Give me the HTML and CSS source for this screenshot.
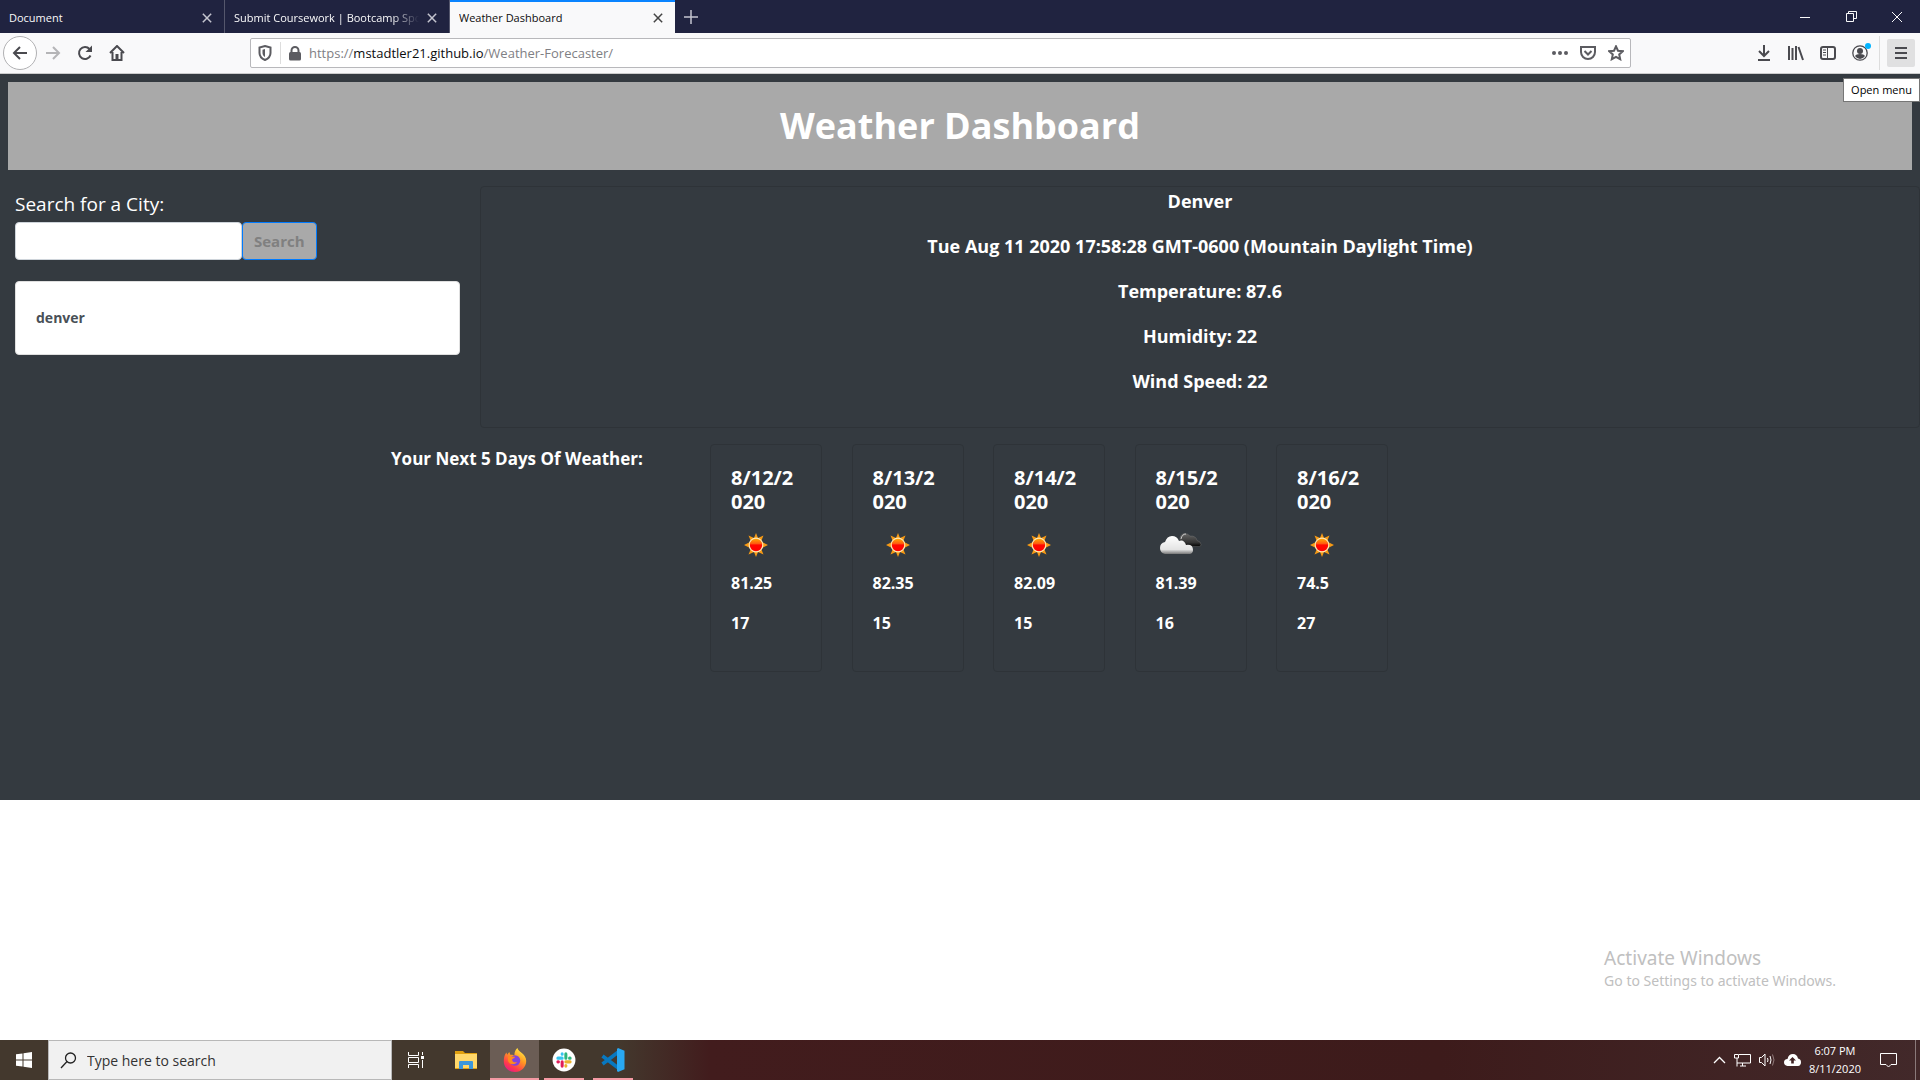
FILE: index.html
```html
<!DOCTYPE html>
<html lang="en">
<head>
<meta charset="utf-8">
<title>Weather Dashboard</title>
<link rel="stylesheet" href="styles.css">
</head>
<body>
<svg class="defs" aria-hidden="true">
  <defs>
    <linearGradient id="sunCore" x1="0" y1="0" x2="0" y2="1"><stop offset="0" stop-color="#ffb000"/><stop offset=".4" stop-color="#ff5a10"/><stop offset=".5" stop-color="#ff0800"/><stop offset="1" stop-color="#ff0000"/></linearGradient>
    <linearGradient id="cloudLight" x1="0" y1="0" x2="0" y2="1"><stop offset="0" stop-color="#fff"/><stop offset=".75" stop-color="#e4e4e4"/><stop offset="1" stop-color="#777"/></linearGradient>
    <linearGradient id="cloudDark" x1="0" y1="0" x2="0" y2="1"><stop offset="0" stop-color="#666"/><stop offset=".7" stop-color="#333"/><stop offset="1" stop-color="#000"/></linearGradient>
    <linearGradient id="fox" x1=".8" y1="0" x2=".2" y2="1"><stop offset="0" stop-color="#fff14a"/><stop offset=".4" stop-color="#ff9a22"/><stop offset=".75" stop-color="#ff3b4b"/><stop offset="1" stop-color="#e4168f"/></linearGradient>
  </defs>
  <symbol id="sun" viewBox="0 0 24 24"><path fill="#f79a14" d="M12 0l2 5 5.500-2.500L17 8.500l7 3.500-7 3.500 2.500 6L14 19l-2 5-2-5-5.500 2.500 2.500-6L0 12l7-3.500-2.500-6L10 5z"/><circle cx="12" cy="12" r="6.800" fill="url(#sunCore)" stroke="#ffe6b0" stroke-width="1.200"/></symbol>
  <symbol id="clouds" viewBox="0 0 42 22"><path fill="url(#cloudDark)" stroke="#777" stroke-width=".4" d="M20 13V5q1-4.500 5-4.500 3 0 5 2.500 6-.5 7 4.500 4 1 4 4 0 2-2 2z"/><path d="M21 6q1-5 5-5" fill="none" stroke="#ccc"/><path fill="url(#cloudLight)" d="M5 21q-5-1-5-6 0-5 5-6Q7 3 12 3q5 0 7 5 5-2 7 4 7-1 7 5 0 3-3 4z"/></symbol>
  <symbol id="x" viewBox="0 0 12 12"><path d="M1 1l10 10M11 1L1 11" fill="none" stroke="currentColor" stroke-width="1.800"/></symbol>
</svg>

<div class="browser">
  <div class="tabs">
    <div class="tab"><span class="tab-title">Document</span><button class="icon-btn" aria-label="Close tab"><svg width="10" height="10"><use href="#x"/></svg></button></div>
    <div class="tab"><span class="tab-title faded">Submit Coursework | Bootcamp Spot</span><button class="icon-btn" aria-label="Close tab"><svg width="10" height="10"><use href="#x"/></svg></button></div>
    <div class="tab active"><span class="tab-title">Weather Dashboard</span><button class="icon-btn" aria-label="Close tab"><svg width="10" height="10"><use href="#x"/></svg></button></div>
    <button class="icon-btn new-tab" aria-label="New tab"><svg width="14" height="14" viewBox="0 0 14 14"><path d="M7 0v14M0 7h14" stroke="currentColor" stroke-width="1.500"/></svg></button>
    <div class="window-controls">
      <button class="icon-btn" aria-label="Minimize"><svg width="10" height="10"><path d="M0 5.500h10" stroke="currentColor"/></svg></button>
      <button class="icon-btn" aria-label="Restore"><svg width="11" height="11" fill="none"><path d="M.5 2.500h7v8h-7zM2.500 2.500v-2h8v7h-3" stroke="currentColor"/></svg></button>
      <button class="icon-btn" aria-label="Close"><svg width="10" height="10"><path d="M0 0l10 10M10 0L0 10" stroke="currentColor"/></svg></button>
    </div>
  </div>

  <div class="toolbar">
    <div class="nav-buttons">
      <button class="icon-btn back" aria-label="Back"><svg width="16" height="16" viewBox="0 0 16 16"><path d="M15 8H2M8 2L2 8l6 6" class="line"/></svg></button>
      <button class="icon-btn forward" aria-label="Forward"><svg width="16" height="16" viewBox="0 0 16 16"><path d="M1 8h13M8 2l6 6-6 6" class="line"/></svg></button>
      <button class="icon-btn" aria-label="Reload"><svg width="16" height="16" viewBox="0 0 16 16"><path d="M13.500 10.500A6 6 0 1 1 12.500 4" class="line"/><path d="M15 .5v6.500H8.500z" fill="currentColor"/></svg></button>
      <button class="icon-btn" aria-label="Home"><svg width="16" height="16" viewBox="0 0 16 16"><path d="M1 8l7-7 7 7M3.500 7v8h9V7" class="line"/><path d="M6.500 9h3v6h-3z" fill="currentColor"/></svg></button>
    </div>
    <div class="url-bar">
      <svg width="14" height="16" viewBox="0 0 14 16"><path d="M7 1l5.500 1.500V8c0 3-2 5.500-5.500 7C3.500 13.500 1.500 11 1.500 8V2.500z" class="line"/><path d="M7 4l-2.500.7V8c0 1.500.8 3 2.500 4z" fill="currentColor"/></svg>
      <span class="url-divider"></span>
      <svg width="12" height="15" viewBox="0 0 12 15"><rect y="6" width="12" height="8.500" rx="1.500" fill="currentColor"/><path d="M2.500 7V4.500a3.500 3.500 0 0 1 7 0V7" class="line"/></svg>
      <span class="url">https://<b>mstadtler21.github.io</b>/Weather-Forecaster/</span>
      <button class="icon-btn" aria-label="Page actions"><svg width="16" height="4"><g fill="currentColor"><circle cx="2" cy="2" r="2"/><circle cx="8" cy="2" r="2"/><circle cx="14" cy="2" r="2"/></g></svg></button>
      <button class="icon-btn" aria-label="Save to Pocket"><svg width="16" height="16" viewBox="0 0 16 16"><path d="M1 2h14v5a7 7 0 0 1-14 0zM4.500 6L8 9.500 11.500 6" class="line"/></svg></button>
      <button class="icon-btn" aria-label="Bookmark"><svg width="16" height="16" viewBox="0 0 16 16"><path d="M8 1.300l2 4.400 4.800.5-3.600 3.200 1 4.800L8 11.800l-4.200 2.400 1-4.800L1.200 6.200 6 5.700z" class="line"/></svg></button>
    </div>
    <div class="tools">
      <button class="icon-btn" aria-label="Downloads"><svg width="14" height="16" viewBox="0 0 14 16"><path d="M7 0v11M2 6l5 5 5-5M1 15h12" class="line"/></svg></button>
      <button class="icon-btn" aria-label="Library"><svg width="16" height="16" viewBox="0 0 16 16"><path d="M1 1v14M4.500 3v12M8 1v14M10.500 2L15 15" class="line"/></svg></button>
      <button class="icon-btn" aria-label="Sidebar"><svg width="16" height="14" viewBox="0 0 16 14"><rect x="1" y="1" width="14" height="12" rx="2" class="line"/><path d="M7.500 1v12M3 4h3M3 6.500h3M3 9h3" stroke="currentColor"/></svg></button>
      <button class="icon-btn account" aria-label="Account"><svg width="16" height="16" viewBox="0 0 16 16"><circle cx="8" cy="8" r="7.200" fill="none" stroke="currentColor" stroke-width="1.300"/><circle cx="8" cy="6" r="3" fill="currentColor"/><path d="M3 11q1-2 5-2t5 2q-2 3-5 3t-5-3" fill="currentColor"/></svg><span class="badge"></span></button>
      <span class="tool-divider"></span>
      <button class="icon-btn menu" aria-label="Open menu"><svg width="12" height="12"><path d="M0 1h12M0 6h12M0 11h12" stroke="currentColor" stroke-width="2"/></svg></button>
    </div>
    <div class="tooltip" role="tooltip">Open menu</div>
  </div>
</div>

<main class="page">
  <header class="banner"><h1>Weather Dashboard</h1></header>
  <div class="top">
    <section class="search-col">
      <label for="city">Search for a City:</label>
      <form class="search-form"><input id="city" type="text"><button type="button">Search</button></form>
      <ul class="history"><li>denver</li></ul>
    </section>
    <section class="card today">
      <p>Denver</p>
      <p>Tue Aug 11 2020 17:58:28 GMT-0600 (Mountain Daylight Time)</p>
      <p>Temperature: 87.6</p>
      <p>Humidity: 22</p>
      <p>Wind Speed: 22</p>
    </section>
  </div>
  <section class="forecast">
    <h2>Your Next 5 Days Of Weather:</h2>
    <div class="days">
      <article class="card day"><h3>8/12/2020</h3><svg class="wx"><use href="#sun" x="13" width="24" height="24"/></svg><p>81.25</p><p>17</p></article>
      <article class="card day"><h3>8/13/2020</h3><svg class="wx"><use href="#sun" x="13" width="24" height="24"/></svg><p>82.35</p><p>15</p></article>
      <article class="card day"><h3>8/14/2020</h3><svg class="wx"><use href="#sun" x="13" width="24" height="24"/></svg><p>82.09</p><p>15</p></article>
      <article class="card day"><h3>8/15/2020</h3><svg class="wx"><use href="#clouds" x="4" width="42" height="22"/></svg><p>81.39</p><p>16</p></article>
      <article class="card day"><h3>8/16/2020</h3><svg class="wx"><use href="#sun" x="13" width="24" height="24"/></svg><p>74.5</p><p>27</p></article>
    </div>
  </section>
</main>

<aside class="watermark"><strong>Activate Windows</strong><span>Go to Settings to activate Windows.</span></aside>

<footer class="taskbar">
  <button class="task start" aria-label="Start"><svg width="16" height="16" viewBox="0 0 16 16"><path fill="#fff" d="M0 2.300L6.500 1.400v6.100H0zM7.500 1.200L16 0v7.500H7.500zM0 8.500h6.500v6.100L0 13.700zM7.500 8.500H16V16l-8.500-1.200z"/></svg></button>
  <label class="task-search"><svg width="17" height="17" viewBox="0 0 17 17"><circle cx="10.500" cy="6" r="5" fill="none" stroke="#222" stroke-width="1.300"/><path d="M7 9.500L1 16" stroke="#222" stroke-width="1.300"/></svg><input type="text" placeholder="Type here to search" aria-label="Type here to search"></label>
  <button class="task" aria-label="Task view"><svg width="17" height="16" viewBox="0 0 17 16" fill="none" stroke="#fff"><path d="M.5 0v3.500h10V0M.5 16v-3.500h10V16M.5 5.500h10v5H.5zM14.500 0v3M14.500 8v8"/><path d="M13 5.500h3" stroke-width="3"/></svg></button>
  <button class="task" aria-label="File Explorer"><svg width="22" height="18" viewBox="0 0 22 18"><path d="M0 0h8l2 2h12v16H0z" fill="#e0a010"/><path d="M0 3h22v14H0z" fill="#ffd86b"/><path d="M4 18v-7q0-1 1-1h12q1 0 1 1v7h-4v-4H8v4z" fill="#3b97dc"/></svg></button>
  <button class="task current running" aria-label="Firefox"><svg width="24" height="24" viewBox="0 0 24 24"><path fill="url(#fox)" d="M14.500 0c.5 2.200 2 3.200 3.700 4.500 3 2.400 5 5 5 8.500C23.200 19 18.500 24 12 24S.8 19.200.8 13c0-3.600 1-6.500 2.700-8.400l.6 2.200L6.300 4l1 2.700c2-.2 3.200.3 4.200 1.100C11.200 4.600 12.200 1.800 14.500 0z"/><circle cx="12" cy="12.500" r="5.200" fill="#8243dc"/><path fill="#ff8a1e" d="M5 8.500c2.500-.8 4 .5 7 .3-.3 1.500-2 1.700-3 2.700.4 2.700 3 3.500 5 2.300-.7 3-7.500 4-9-1.300z"/></svg></button>
  <button class="task running" aria-label="Slack"><svg width="24" height="24" viewBox="0 0 22 22"><circle cx="11" cy="11" r="10.500" fill="#fff"/><g stroke-width="2.800" stroke-linecap="round"><path d="M9.300 5.400v.4M5.400 9.300h3.900" stroke="#36c5f0"/><path d="M12.700 5.400v3.900M16.600 9.300h-.5" stroke="#2eb67d"/><path d="M12.700 12.700h3.900M12.700 16.600v-.5" stroke="#ecb22e"/><path d="M9.300 12.700v3.900M5.400 12.700h.5" stroke="#e01e5a"/></g></svg></button>
  <button class="task running" aria-label="Visual Studio Code"><svg width="24" height="24" viewBox="0 0 24 24"><path d="M1.500 8L18 20.500M1.500 16L18 3.500" stroke="#0878c0" stroke-width="3.600"/><path fill="#29a8f2" d="M17 0l6.500 2.800v18.400L17 24l-1-1V1z"/></svg></button>
  <div class="tray">
    <svg width="13" height="8" viewBox="0 0 13 8"><path d="M1 7l5.500-5.500L12 7" fill="none" stroke="#fff" stroke-width="1.300"/></svg>
    <svg width="17" height="14" viewBox="0 0 17 14" fill="none" stroke="#fff"><path d="M5 1.500h11.500v8.500H3V5M.5 1.500h4v3.500h-4zM8.500 10v3M6 13h6M3 10v3.500"/></svg>
    <svg width="17" height="14" viewBox="0 0 17 14" fill="none" stroke="#fff"><path d="M.5 4.500h2L6 1v12L2.500 9.500h-2zM8.500 5q1 2 0 4M11 3q2 4 0 8"/><path d="M13.500 1.500q3 5.500 0 11" stroke="#927c7c"/></svg>
    <svg width="17" height="12" viewBox="0 0 17 12"><path fill="#fff" d="M3.500 12Q0 11.500 0 8.300 0 5.300 3.500 5 4.500 0 9 0q4 0 5 4.500 3 .5 3 3.700 0 3.300-3 3.800z"/><path fill="#402223" d="M8.500 3L12 6.500H9.800V9.500H7.200V6.500H5z"/></svg>
    <div class="clock"><span>6:07 PM</span><span>8/11/2020</span></div>
    <button class="icon-btn" aria-label="Notifications"><svg width="17" height="17" viewBox="0 0 17 17"><path d="M.5 1.500h16v11H11L8.500 15 6 12.500H.5z" fill="none" stroke="#fff"/></svg></button>
    <span class="peek"></span>
  </div>
</footer>
</body>
</html>
```
FILE: styles.css
```css
* { box-sizing: border-box; }
body {
  margin: 0;
  min-height: 100vh;
  display: flex;
  flex-direction: column;
  background: #fff;
  font-family: "Open Sans", "Noto Sans", sans-serif;
}
button, input { font: inherit; }
.defs { position: absolute; width: 0; height: 0; }
.line { fill: none; stroke: currentColor; stroke-width: 2; }
.icon-btn {
  display: flex;
  align-items: center;
  justify-content: center;
  flex: none;
  padding: 0;
  border: 0;
  background: none;
  color: inherit;
}

/* Tab strip */
.tabs { display: flex; height: 33px; background: #202340; color: #f9f9fa; font-size: 11px; }
.tab {
  display: flex;
  align-items: center;
  gap: 8px;
  flex: 0 1 225px;
  min-width: 0;
  padding: 2px 12px 0 9px;
  border-right: 1px solid #55576c;
}
.tab .icon-btn { color: #c4c5cf; }
.tab-title { flex: 1; overflow: hidden; white-space: nowrap; }
.faded { mask-image: linear-gradient(to right, #000 85%, transparent); }
.tab.active { background: #f9f9fa; color: #0c0c0d; border-top: 2px solid #0a84ff; border-right: 0; padding-top: 0; }
.tab.active .icon-btn { color: #444; }
.new-tab { width: 32px; color: #c4c5cf; }
.window-controls { display: flex; margin-left: auto; }
.window-controls .icon-btn { width: 46px; }

/* Navigation toolbar */
.toolbar {
  position: relative;
  display: grid;
  grid-template-columns: 250px 1fr 289px;
  align-items: center;
  height: 41px;
  background: #f9f9fa;
  border-bottom: 1px solid #ccc;
  color: #4a4a4f;
}
.nav-buttons { display: flex; align-items: center; padding-left: 3px; }
.nav-buttons .icon-btn { width: 32px; height: 32px; }
.nav-buttons .back { width: 34px; height: 34px; border: 1px solid #b1b1b3; border-radius: 50%; background: #fff; }
.nav-buttons .forward { color: #b5b5b7; }
.url-bar {
  display: flex;
  align-items: center;
  gap: 8px;
  height: 30px;
  padding: 0 4px 0 7px;
  border: 1px solid #b8b8bb;
  border-radius: 2px;
  background: #fff;
  color: #5c5c61;
}
.url-divider { width: 1px; height: 22px; background: #ddd; }
.url { flex: 1; font-size: 13px; color: #808084; }
.url b { font-weight: 400; color: #0c0c0d; }
.url-bar .icon-btn { width: 20px; height: 20px; }
.tools { display: flex; align-items: center; justify-content: flex-end; padding-right: 5px; }
.tools .icon-btn { width: 32px; height: 28px; }
.account { position: relative; }
.badge { position: absolute; top: 4px; right: 5px; width: 6px; height: 6px; border-radius: 50%; background: #00b3ff; }
.tool-divider { width: 1px; height: 34px; margin: 0 7px 0 3px; background: #ddd; }
.tools .menu { width: 28px; border-radius: 2px; background: #e0e0e1; }
.tooltip {
  position: absolute;
  top: 45px;
  right: 0;
  padding: 2px 7px;
  border: 1px solid #767676;
  background: #fff;
  color: #000;
  font-size: 11px;
  line-height: 18px;
}

/* Dashboard */
.page { min-height: 726px; padding-top: 8px; background: #343a40; color: #fff; }
.banner { margin: 0 8px; padding: 20px; background: #a9a9a9; text-align: center; }
.banner h1 { margin: 0; font-size: 36px; line-height: 48px; }
.top { display: grid; grid-template-columns: 1fr 3fr; margin-top: 16px; }
.search-col { padding: 3px 20px 0 15px; }
.search-col label { display: block; font-size: 19px; line-height: 30px; }
.search-form { display: flex; margin-top: 3px; }
.search-form input { width: 227px; height: 38px; padding: 6px 12px; border: 1px solid #ced4da; border-radius: 4px; }
.search-form button {
  height: 38px;
  padding: 0 11px;
  border: 1px solid #007bff;
  border-radius: 4px;
  background: #a9a9a9;
  color: #808080;
  font-size: 15px;
  font-weight: 700;
}
.history { margin: 21px 0 0; padding: 20px; border: 1px solid #dfdfdf; border-radius: 4px; background: #fff; color: #495057; list-style: none; font-size: 14px; font-weight: 700; }
.history li { line-height: 32px; }
.card { border: 1px solid #2e3338; border-radius: 4px; }
.today { padding-bottom: 15px; text-align: center; font-size: 18px; font-weight: 700; }
.today p { margin: 0; padding: 1px 0 17px; line-height: 27px; }
.forecast { display: grid; grid-template-columns: 391fr 319fr 678fr 532fr; margin-top: 16px; }
.forecast h2 { grid-column: 2; margin: 0; font-size: 17px; line-height: 29px; }
.days { grid-column: 3; display: flex; justify-content: space-between; }
.day { width: 112px; padding: 21px 20px 20px; font-size: 16px; font-weight: 700; }
.day h3 { margin: 0; font-size: 20px; line-height: 24px; word-break: break-all; }
.wx { display: block; width: 50px; height: 24px; margin: 19px 0 14px; }
.day p { margin: 0 0 16px; line-height: 24px; }

/* Activation notice */
.watermark { display: flex; flex-direction: column; margin: auto 84px 49px auto; color: #c0c0c0; font-family: "Noto Sans", "Open Sans", sans-serif; font-size: 14px; line-height: 20px; }
.watermark strong { font-size: 19px; font-weight: 400; line-height: 26px; }

/* Taskbar */
.taskbar { display: flex; height: 40px; background: linear-gradient(90deg, #43382d 620px, #421c1d 710px, #3d1b1b 75%, #42292a); color: #fff; }
.task { display: flex; align-items: center; justify-content: center; width: 49px; padding: 0; border: 0; background: none; }
.start { width: 48px; }
.task-search { display: flex; align-items: center; gap: 10px; width: 344px; padding: 0 12px 0 11px; border: 1px solid #b8b8b8; background: #f1f1f1; }
.task-search input { flex: 1; min-width: 0; padding: 0; border: 0; background: none; font-size: 14px; }
.task-search input::placeholder { color: #333; opacity: 1; }
.running { background: linear-gradient(#f49aa4, #f49aa4) center bottom / 40px 2px no-repeat; }
.current { background-color: #6b5d55; background-size: 100% 2px; }
.tray { display: flex; align-items: center; gap: 8px; margin-left: auto; padding-right: 4px; }
.clock { display: flex; flex-direction: column; align-items: center; font-size: 11px; line-height: 18px; }
.tray .icon-btn { width: 38px; }
.peek { width: 1px; height: 40px; background: #8a7a7a; }
```
